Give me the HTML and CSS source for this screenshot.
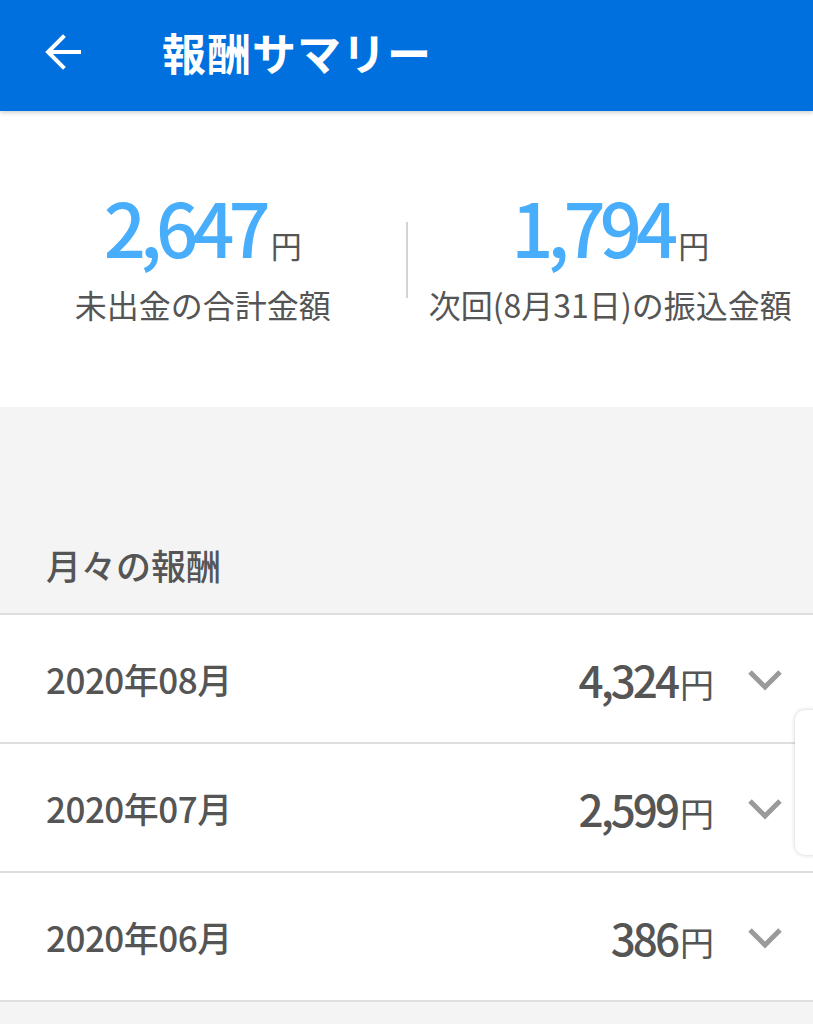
FILE: index.html
```html
<!DOCTYPE html>
<html lang="ja">
<head>
<meta charset="utf-8">
<link rel="stylesheet" href="styles.css">
</head>
<body>
<header class="appbar">
  <svg class="back" viewBox="0 0 40 40" width="40" height="40"><path d="M36 20H6M20 5L5 20L20 35" fill="none" stroke="#fff" stroke-width="4" stroke-linecap="square"/></svg>
  <h1 class="title">報酬サマリー</h1>
</header>
<section class="summary">
  <div class="col">
    <div class="amount"><span class="num">2,647</span><span class="yen">円</span></div>
    <div class="label">未出金の合計金額</div>
  </div>
  <div class="divider"></div>
  <div class="col">
    <div class="amount"><span class="num">1,794</span><span class="yen">円</span></div>
    <div class="label">次回(8月31日)の振込金額</div>
  </div>
</section>
<section class="monthly">
  <h2 class="section-title">月々の報酬</h2>
  <ul class="rows">
    <li class="row"><span class="month">2020年08月</span><span class="value"><span class="vnum">4,324</span><span class="vyen">円</span></span><svg class="chev" viewBox="0 0 36 24" width="36" height="24"><path d="M3 4L18 19L33 4" fill="none" stroke="#9a9a9a" stroke-width="5"/></svg></li>
    <li class="row"><span class="month">2020年07月</span><span class="value"><span class="vnum">2,599</span><span class="vyen">円</span></span><svg class="chev" viewBox="0 0 36 24" width="36" height="24"><path d="M3 4L18 19L33 4" fill="none" stroke="#9a9a9a" stroke-width="5"/></svg></li>
    <li class="row"><span class="month">2020年06月</span><span class="value"><span class="vnum">386</span><span class="vyen">円</span></span><svg class="chev" viewBox="0 0 36 24" width="36" height="24"><path d="M3 4L18 19L33 4" fill="none" stroke="#9a9a9a" stroke-width="5"/></svg></li>
  </ul>
</section>
<div class="scroll-tab"></div>
</body>
</html>
```

FILE: styles.css
```css
* { box-sizing: border-box; }
html, body { margin: 0; padding: 0; }
body {
  width: 813px;
  height: 1024px;
  overflow: hidden;
  background: #f4f4f4;
  font-family: "Noto Sans CJK JP", "Noto Sans", sans-serif;
  color: #555;
  position: relative;
}
.appbar {
  height: 111px;
  background: #0070df;
  display: flex;
  align-items: center;
  padding-left: 43px;
  box-shadow: 0 2px 4px rgba(0,0,0,0.18);
  position: relative;
  z-index: 1;
}
.back { display: block; margin-top: -8px; }
.title {
  margin: -8px 0 0 79px;
  color: #fff;
  font-size: 44px;
  font-weight: 700;
  letter-spacing: 1px;
}
.summary {
  background: #fff;
  height: 296px;
  display: flex;
  padding-top: 78px;
}
.col { flex: 1; display: flex; flex-direction: column; align-items: center; }
.amount { display: flex; align-items: baseline; justify-content: center; white-space: nowrap; }
.num {
  display: inline-block;
  font-size: 74px;
  line-height: 1;
  font-weight: 500;
  color: #48aefc;
  letter-spacing: -6px;
}
.yen { display: inline-block; font-size: 31px; line-height: 1; color: #555; margin-left: 6px; }
.label {
  font-size: 32px;
  margin-top: 19px;
  line-height: 1.4;
  white-space: nowrap;
}
.divider {
  width: 2px;
  height: 76px;
  background: #d4d4d4;
  margin-top: 33px;
}
.monthly { padding-top: 134px; }
.section-title {
  margin: 0 0 24px 46px;
  font-size: 35px;
  font-weight: 500;
  line-height: 48px;
}
.rows { list-style: none; margin: 0; padding: 0; border-top: 2px solid #dedede; }
.row {
  height: 129px;
  background: #fff;
  border-bottom: 2px solid #dedede;
  display: flex;
  align-items: center;
  padding: 0 30px 0 46px;
}
.month { font-size: 35px; font-weight: 500; flex: 1; letter-spacing: -0.5px; }
.value { white-space: nowrap; }
.vnum { font-size: 44px; font-weight: 500; letter-spacing: -3px; }
.vyen { font-size: 34px; margin-left: 3px; }
.chev { margin-left: 33px; margin-top: 2px; }
.scroll-tab {
  position: absolute;
  left: 795px;
  top: 710px;
  width: 30px;
  height: 145px;
  background: #fff;
  border-radius: 10px;
  box-shadow: 0 0 4px rgba(0,0,0,0.2);
}
```
